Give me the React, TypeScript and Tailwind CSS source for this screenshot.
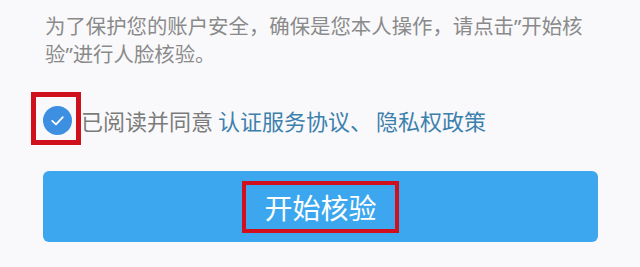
import React from "react";

const Q = () => (
  <span style={{ fontFamily: '"Noto Sans", sans-serif' }}>”</span>
);

export default function App() {
  return (
    <div
      className="w-[640px] h-[267px] overflow-hidden bg-[#f9f9fb]"
      style={{ fontFamily: '"Noto Sans CJK SC", "Noto Sans", sans-serif' }}
    >
      <p className="pl-[45px] pt-[12px] w-[600px] text-[20.4px] leading-[27px] text-[#8a8a8a]">
        为了保护您的账户安全，确保是您本人操作，请点击<Q />开始核验<Q />进行人脸核验。
      </p>

      <div className="mt-[37px] ml-[43px] flex items-center h-[30px]">
        <div className="relative">
          <div className="w-[29px] h-[29px] rounded-full bg-[#3d8fe2] flex items-center justify-center">
            <svg width="17" height="17" viewBox="0 0 16 16" fill="none">
              <path
                d="M3 8.4 L6.6 11.6 L13 4.9"
                stroke="white"
                strokeWidth="1.7"
                strokeLinecap="round"
                strokeLinejoin="round"
              />
            </svg>
          </div>
          <div className="absolute left-[-12px] top-[-14px] w-[50px] h-[53px] border-[5px] border-[#d0101c]" />
        </div>
        <span className="ml-[9px] text-[22px] text-[#7b7b7b] whitespace-nowrap">
          已阅读并同意
          <span className="ml-[5px] text-[#3c80ad]">认证服务协议、</span>
          <span className="ml-[4px] text-[#3c80ad]">隐私权政策</span>
        </span>
      </div>

      <div className="mt-[36px] ml-[43px] w-[555px] h-[71px] rounded-[6px] bg-[#3ca7ee] flex items-center justify-center">
        <div className="border-[4px] border-[#d0101c] w-[157px] h-[52px] flex items-center justify-center">
          <span className="text-[28px] text-white leading-none">开始核验</span>
        </div>
      </div>
    </div>
  );
}
